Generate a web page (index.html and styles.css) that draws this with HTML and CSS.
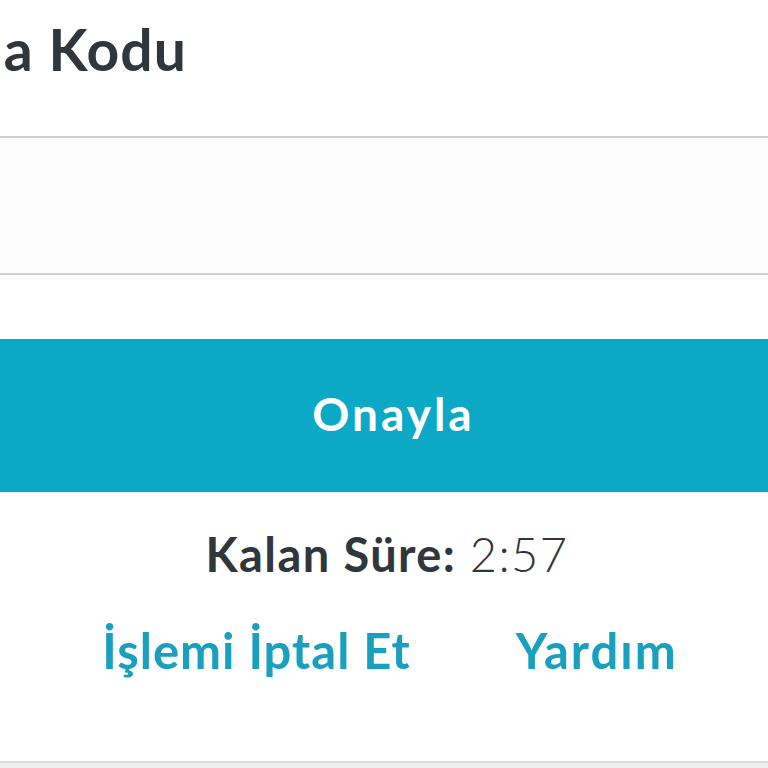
FILE: index.html
```html
<!DOCTYPE html>
<html lang="tr">
<head>
<meta charset="utf-8">
<title>Doğrulama Kodu</title>
<link rel="stylesheet" href="styles.css">
</head>
<body>
<div class="page">
  <header class="head">
    <h1 class="title">Doğrulama Kodu</h1>
  </header>
  <div class="field"></div>
  <button class="confirm" type="button">Onayla</button>
  <p class="timer"><span class="timer-label">Kalan Süre:</span> <span class="timer-value">2:57</span></p>
  <nav class="links">
    <a class="link" href="#">İşlemi İptal Et</a>
    <a class="link" href="#">Yardım</a>
  </nav>
  <div class="foot"></div>
</div>
</body>
</html>
```
FILE: styles.css
```css
html, body {
  margin: 0;
  padding: 0;
  background: #ffffff;
}
.page {
  width: 768px;
  height: 768px;
  overflow: hidden;
  display: flex;
  flex-direction: column;
  font-family: Lato, "Noto Sans", "DejaVu Sans", sans-serif;
  color: #30373c;
}
.head {
  height: 136px;
  border-bottom: 2px solid #cfcfcf;
  overflow: hidden;
  flex: none;
}
.title {
  margin: 0 0 0 -254px;
  padding-top: 17px;
  font-size: 57px;
  font-weight: 700;
  letter-spacing: 1px;
  line-height: 64px;
  white-space: nowrap;
  color: #30373c;
}
.field {
  height: 135px;
  border-bottom: 2px solid #cfcfcf;
  background: #fdfdfd;
  flex: none;
}
.confirm {
  margin: 64px 0 0;
  height: 153px;
  border: 0;
  padding: 0 0 4px 19px;
  width: 100%;
  background: #0ca9c6;
  color: #ffffff;
  font-family: inherit;
  font-size: 46px;
  font-weight: 700;
  letter-spacing: 3px;
  flex: none;
}
.timer {
  margin: 34px 0 0;
  padding-left: 6px;
  text-align: center;
  font-size: 47px;
  line-height: 56px;
  letter-spacing: 1.4px;
}
.timer-label {
  font-weight: 700;
}
.timer-value {
  font-weight: 300;
}
.links {
  margin-top: 40px;
  padding-left: 12px;
  display: flex;
  justify-content: center;
  gap: 105px;
}
.link {
  font-size: 49px;
  font-weight: 700;
  letter-spacing: 1px;
  line-height: 56px;
  color: #1aa0bf;
  text-decoration: none;
}
.link + .link {
  letter-spacing: 2px;
}
.foot {
  margin-top: auto;
  height: 5px;
  border-top: 2px solid #dedede;
  background: #efefef;
  flex: none;
}
```
